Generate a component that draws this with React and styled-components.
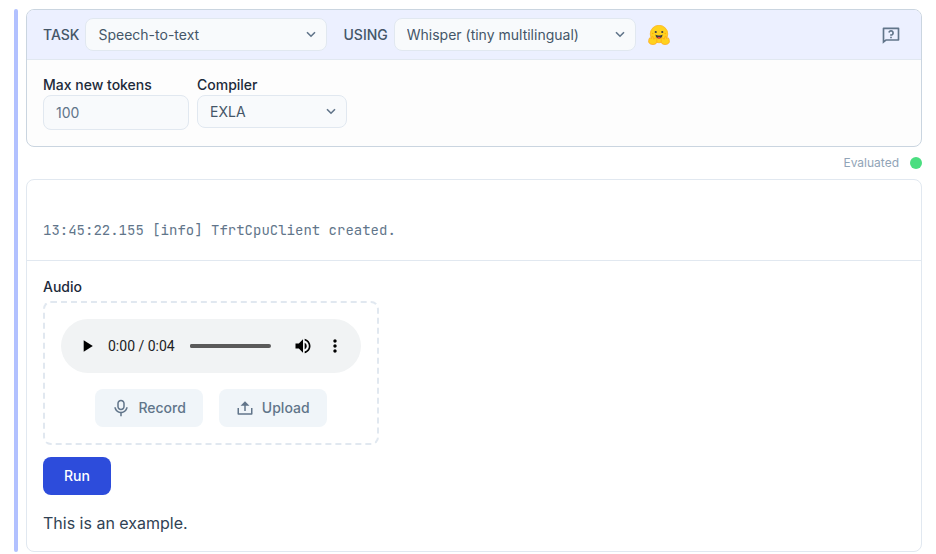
import React, { useState } from "react";
import styled, { createGlobalStyle } from "styled-components";
import { RiQuestionnaireLine, RiMicLine, RiUpload2Line } from "react-icons/ri";
import { MdPlayArrow, MdVolumeUp, MdMoreVert } from "react-icons/md";

const GlobalStyle = createGlobalStyle`
  *, *::before, *::after { box-sizing: border-box; }
  body {
    margin: 0;
    background: #ffffff;
    color: #304254;
    font-family: Inter, "Liberation Sans", sans-serif;
    font-size: 14px;
    line-height: 20px;
  }
  button, input, select { font: inherit; color: inherit; margin: 0; }
`;

const Cell = styled.main`
  display: flex;
  gap: 8px;
  padding: 9px 14px 2px;
`;

const FocusBar = styled.div`
  flex: none;
  width: 4px;
  border-radius: 2px;
  background: #b2c1ff;
`;

const CellContent = styled.div`
  flex: 1;
  min-width: 0;
`;

const Panel = styled.section`
  border: 1px solid ${(p) => (p.$strong ? "#cad5e0" : "#e1e8f0")};
  border-radius: 8px;
  background: ${(p) => (p.$strong ? "#fdfdfd" : "#ffffff")};
  overflow: hidden;
`;

const Header = styled.header`
  display: flex;
  align-items: center;
  gap: 16px;
  padding: 8px 16px;
  background: #ecf0ff;
  border-bottom: 1px solid #e1e8f0;
`;

const InlineField = styled.label`
  display: flex;
  align-items: center;
  gap: 6px;
  color: #445668;
  font-weight: 500;
`;

const SelectBox = styled.span`
  display: grid;
  align-items: center;
  width: ${(p) => p.$width};

  > * { grid-area: 1 / 1; }

  > svg {
    justify-self: end;
    margin-right: 11px;
    pointer-events: none;
  }
`;

const SelectInput = styled.select`
  appearance: none;
  width: 100%;
  height: 33px;
  padding: 0 32px 0 12px;
  border: 1px solid #e1e8f0;
  border-radius: 8px;
  background: #f8fafc;
  color: #445668;
  font-weight: 400;
`;

const ModelLink = styled.a`
  display: flex;
  margin-left: -4px;
`;

const HelpButton = styled.button`
  display: flex;
  margin-left: auto;
  padding: 0;
  border: 0;
  background: none;
  color: #61758a;
  margin-right: 4px;
`;

const Params = styled.div`
  display: flex;
  align-items: flex-start;
  gap: 8px;
  padding: 16px;
`;

const Field = styled.label`
  display: flex;
  flex-direction: column;
  gap: 2px;
  color: #1c2a3a;
  font-weight: 500;
  line-height: 17px;
`;

const NumberInput = styled.input`
  width: 146px;
  height: 35px;
  padding: 0 12px;
  border: 1px solid #e1e8f0;
  border-radius: 8px;
  background: #f8fafc;
  color: #61758a;
  font-weight: 400;
`;

const Status = styled.div`
  display: flex;
  align-items: center;
  justify-content: flex-end;
  gap: 11px;
  height: 32px;
  color: #91a4b7;
  font-size: 12px;
`;

const StatusDot = styled.span`
  width: 12px;
  height: 12px;
  border-radius: 50%;
  background: #4ade80;
`;

const Log = styled.pre`
  margin: 0;
  padding: 40px 16px 20px;
  border-bottom: 1px solid #e1e8f0;
  color: #61758a;
  font-family: "JetBrains Mono", "Liberation Mono", monospace;
  font-size: 14px;
  line-height: 20px;
  overflow-x: auto;
`;

const Form = styled.form`
  display: flex;
  flex-direction: column;
  align-items: flex-start;
  padding: 16px;
`;

const GroupLabel = styled.span`
  color: #1c2a3a;
  font-weight: 500;
  margin-bottom: 4px;
`;

const AudioBox = styled.div`
  display: flex;
  flex-direction: column;
  align-items: center;
  gap: 16px;
  padding: 16px;
  border: 2px dashed #e1e8f0;
  border-radius: 8px;
`;

const Player = styled.div`
  display: flex;
  align-items: center;
  width: 300px;
  height: 54px;
  padding: 0 10px;
  border-radius: 27px;
  background: #f1f3f4;
  color: #000000;
`;

const PlayerButton = styled.button`
  display: flex;
  align-items: center;
  justify-content: center;
  flex: none;
  width: 32px;
  height: 32px;
  padding: 0;
  border: 0;
  background: none;
`;

const Time = styled.span`
  flex: none;
  margin: 0 15px 0 5px;
  color: #202124;
  font-family: Roboto, sans-serif;
  font-size: 14px;
`;

const Timeline = styled.input`
  appearance: none;
  flex: 1;
  min-width: 0;
  height: 4px;
  margin-right: 16px;
  border-radius: 2px;
  background: #5a5a5a;

  &::-webkit-slider-thumb {
    appearance: none;
    width: 4px;
    height: 4px;
    border-radius: 50%;
    background: #5a5a5a;
  }
`;

const ButtonRow = styled.div`
  display: flex;
  gap: 16px;
`;

const Button = styled.button`
  display: flex;
  align-items: center;
  gap: 8px;
  height: 38px;
  padding: 0 ${(p) => (p.$primary ? 20 : 16)}px;
  border: 1px solid transparent;
  border-radius: 8px;
  background: ${(p) => (p.$primary ? "#2d4cdb" : "#f0f5f9")};
  color: ${(p) => (p.$primary ? "#ffffff" : "#61758a")};
  font-weight: 500;
`;

const RunButton = styled(Button)`
  margin-top: 12px;
`;

const Result = styled.p`
  margin: 16px 0 0;
  font-size: 16px;
  line-height: 24px;
`;

function Select({ width, options }) {
  return (
    <SelectBox $width={width}>
      <SelectInput>
        {options.map((o) => (
          <option key={o}>{o}</option>
        ))}
      </SelectInput>
      <svg width="10" height="7" viewBox="0 0 10 7" fill="none" aria-hidden="true">
        <path d="M1 1.2l4 4 4-4" stroke="#61758a" strokeWidth="1.6" />
      </svg>
    </SelectBox>
  );
}

function HuggingFace() {
  return (
    <svg width="22" height="20" viewBox="0 0 44 40" aria-hidden="true">
      <circle cx="22" cy="18" r="17.5" fill="#ffd21e" stroke="#ffb01a" strokeWidth="1.5" />
      <circle cx="15.5" cy="14" r="2.2" fill="#3a3b45" />
      <circle cx="28.5" cy="14" r="2.2" fill="#3a3b45" />
      <circle cx="9.5" cy="17" r="1.6" fill="#ffad03" />
      <circle cx="34.5" cy="17" r="1.6" fill="#ffad03" />
      <path d="M15 19c2 1.500 4.500 2 7 2s5-.5 7-2c0 5-3 8-7 8s-7-3-7-8z" fill="#3a3b45" />
      <path d="M18.500 25.800c1-1.700 2.500-2 3.500-1.100 1-.9 2.500-.6 3.500 1.100-2 1.700-5 1.700-7 0z" fill="#f94040" />
      <g fill="#ffd21e" stroke="#ffa51a" strokeWidth="1.5" strokeLinejoin="round">
        <path d="M8 23c1.800-.8 3 .5 3 2.500l.8 3c1.200-2 3.400-3.600 5-2 1.400 1.500.2 3.500.8 6 .6 4-2.600 6.500-7.600 6.500-5.500 0-7.500-2.200-8.500-4.500-1-2 .2-3 .2-3-1.200-1.500-.2-3 1-3.200-.5-1.800.8-3 2.200-2.500L7 27z" />
        <path d="M36 23c-1.800-.8-3 .5-3 2.500l-.8 3c-1.200-2-3.400-3.600-5-2-1.400 1.500-.2 3.500-.8 6-.6 4 2.600 6.500 7.600 6.500 5.500 0 7.500-2.200 8.500-4.500 1-2-.2-3-.2-3 1.200-1.500.2-3-1-3.200.5-1.800-.8-3-2.200-2.500L37 27z" />
      </g>
    </svg>
  );
}

export default function App() {
  const [tokens, setTokens] = useState("100");
  const [position, setPosition] = useState(0);

  return (
    <>
      <GlobalStyle />
      <Cell>
        <FocusBar />
        <CellContent>
          <Panel $strong>
            <Header>
              <InlineField>
                TASK
                <Select width="242px" options={["Speech-to-text"]} />
              </InlineField>
              <InlineField>
                USING
                <Select width="242px" options={["Whisper (tiny multilingual)"]} />
              </InlineField>
              <ModelLink href="#model" aria-label="Model page">
                <HuggingFace />
              </ModelLink>
              <HelpButton type="button" aria-label="Help">
                <RiQuestionnaireLine size={20} />
              </HelpButton>
            </Header>
            <Params>
              <Field>
                Max new tokens
                <NumberInput
                  inputMode="numeric"
                  value={tokens}
                  onChange={(e) => setTokens(e.target.value)}
                />
              </Field>
              <Field>
                Compiler
                <Select width="150px" options={["EXLA"]} />
              </Field>
            </Params>
          </Panel>

          <Status>
            Evaluated
            <StatusDot />
          </Status>

          <Panel>
            <Log>13:45:22.155 [info] TfrtCpuClient created.</Log>
            <Form onSubmit={(e) => e.preventDefault()}>
              <GroupLabel id="audio-label">Audio</GroupLabel>
              <AudioBox role="group" aria-labelledby="audio-label">
                <Player>
                  <PlayerButton type="button" aria-label="Play">
                    <MdPlayArrow size={20} />
                  </PlayerButton>
                  <Time>0:00 / 0:04</Time>
                  <Timeline
                    type="range"
                    min="0"
                    max="4"
                    value={position}
                    onChange={(e) => setPosition(Number(e.target.value))}
                    aria-label="Playback position"
                  />
                  <PlayerButton type="button" aria-label="Mute">
                    <MdVolumeUp size={20} />
                  </PlayerButton>
                  <PlayerButton type="button" aria-label="More options">
                    <MdMoreVert size={20} />
                  </PlayerButton>
                </Player>
                <ButtonRow>
                  <Button type="button">
                    <RiMicLine size={18} />
                    Record
                  </Button>
                  <Button type="button">
                    <RiUpload2Line size={18} />
                    Upload
                  </Button>
                </ButtonRow>
              </AudioBox>
              <RunButton $primary type="submit">Run</RunButton>
              <Result>This is an example.</Result>
            </Form>
          </Panel>
        </CellContent>
      </Cell>
    </>
  );
}
